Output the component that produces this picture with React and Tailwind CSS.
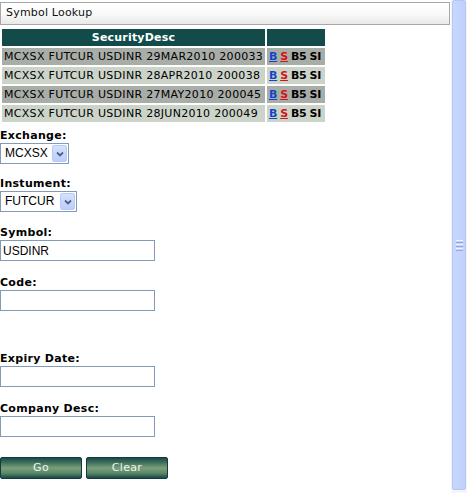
import React from "react";

const font = { fontFamily: '"DejaVu Sans", Verdana, sans-serif' };
const arial = { fontFamily: '"Liberation Sans", Arial, sans-serif' };

const rows = [
  "MCXSX FUTCUR USDINR 29MAR2010 200033",
  "MCXSX FUTCUR USDINR 28APR2010 200038",
  "MCXSX FUTCUR USDINR 27MAY2010 200045",
  "MCXSX FUTCUR USDINR 28JUN2010 200049",
];

function Label({ children, mt }) {
  return (
    <div
      className={`h-[14px] leading-[14px] text-[11px] font-bold tracking-[0.3px] text-black ${mt}`}
      style={font}
    >
      {children}
    </div>
  );
}

function Select({ value, w }) {
  return (
    <div
      className={`flex h-[21px] ${w} items-center border border-[#7f9db9] bg-white p-[1px]`}
    >
      <span className="flex-1 pl-[3px] text-[12px] leading-[17px] text-black" style={arial}>
        {value}
      </span>
      <span className="flex h-[17px] w-[15px] items-center justify-center rounded-[2px] border border-[#b9cbf5] bg-[linear-gradient(to_bottom,#d3e0fd,#bccffb)]">
        <svg width="8" height="6" viewBox="0 0 8 6">
          <path d="M1 1.5 L4 4.5 L7 1.5" stroke="#4d6185" strokeWidth="1.8" fill="none" />
        </svg>
      </span>
    </div>
  );
}

function Input({ value }) {
  return (
    <div
      className="flex h-[21px] w-[155px] items-center border border-[#7f9db9] bg-white pl-[2px] text-[12px] text-black"
      style={arial}
    >
      {value}
    </div>
  );
}

function Button({ children }) {
  return (
    <div
      className="flex h-[22px] w-[82px] items-center justify-center rounded-[2px] border border-[#103d3c] bg-[linear-gradient(to_bottom,#1a4a48_0%,#3f6e5c_22%,#79a079_50%,#5a8669_76%,#184846_100%)] text-[11px] tracking-[0.3px] text-[#eef4ee]"
      style={font}
    >
      {children}
    </div>
  );
}

export default function App() {
  return (
    <div className="flex h-[493px] w-[467px] overflow-hidden bg-white">
      <div className="flex w-[451px] flex-col">
        <div
          className="mt-[2px] flex h-[23px] w-[450px] items-center border border-[#a7a7a7] bg-[linear-gradient(to_bottom,#ffffff,#fafafa_50%,#e9e9e9)] pl-[5px] text-[11px] tracking-[0.2px] text-[#111]"
          style={font}
        >
          Symbol Lookup
        </div>
        <table
          className="mt-[2px] w-[327px] table-fixed border-separate border-spacing-[2px]"
          style={font}
        >
          <colgroup>
            <col className="w-[263px]" />
            <col className="w-[58px]" />
          </colgroup>
          <thead>
            <tr>
              <th className="h-[17px] bg-[#134b4b] p-0 text-center text-[11px] font-bold leading-[17px] tracking-[0.2px] text-white">
                SecurityDesc
              </th>
              <th className="h-[17px] bg-[#134b4b] p-0"></th>
            </tr>
          </thead>
          <tbody>
            {rows.map((r, i) => (
              <tr key={r} className={i % 2 === 0 ? "bg-[#a9ada8]" : "bg-[#ccd4ca]"}>
                <td className="h-[17px] overflow-hidden whitespace-nowrap p-0 pl-[2px] text-[11px] leading-[17px] tracking-[0.3px] text-black">
                  {r}
                </td>
                <td className="h-[17px] p-0 pl-[2px] text-[11px] font-bold leading-[17px] text-black">
                  <div className="flex whitespace-nowrap tracking-[-0.2px]">
                    <span className="text-[#1246c8] underline">B</span>
                    <span className="ml-[3px] text-[#d41414] underline">S</span>
                    <span className="ml-[3px]">B5</span>
                    <span className="ml-[3px]">SI</span>
                  </div>
                </td>
              </tr>
            ))}
          </tbody>
        </table>

        <Label mt="mt-[5px]">Exchange:</Label>
        <Select value="MCXSX" w="w-[69px]" />
        <Label mt="mt-[13px]">Instument:</Label>
        <Select value="FUTCUR" w="w-[77px]" />
        <Label mt="mt-[14px]">Symbol:</Label>
        <Input value="USDINR" />
        <Label mt="mt-[15px]">Code:</Label>
        <Input value="" />
        <Label mt="mt-[41px]">Expiry Date:</Label>
        <Input value="" />
        <Label mt="mt-[15px]">Company Desc:</Label>
        <Input value="" />

        <div className="mt-[20px] flex gap-[4px]">
          <Button>Go</Button>
          <Button>Clear</Button>
        </div>
      </div>

      <div className="flex h-[493px] w-[16px] bg-[#f4f6fc] pl-[1px]">
        <div className="mb-[3px] flex w-[14px] flex-col items-center justify-center rounded-[2px] border border-[#b3c6f4] bg-[linear-gradient(to_right,#c8d7fd,#bfd0fb)]">
          <div className="flex flex-col gap-[1px]">
            <div className="h-[1px] w-[7px] bg-[#eef3ff]" />
            <div className="h-[1px] w-[7px] bg-[#8fa8e4]" />
            <div className="h-[1px] w-[7px] bg-[#eef3ff]" />
            <div className="h-[1px] w-[7px] bg-[#8fa8e4]" />
            <div className="h-[1px] w-[7px] bg-[#eef3ff]" />
            <div className="h-[1px] w-[7px] bg-[#8fa8e4]" />
          </div>
        </div>
      </div>
    </div>
  );
}
